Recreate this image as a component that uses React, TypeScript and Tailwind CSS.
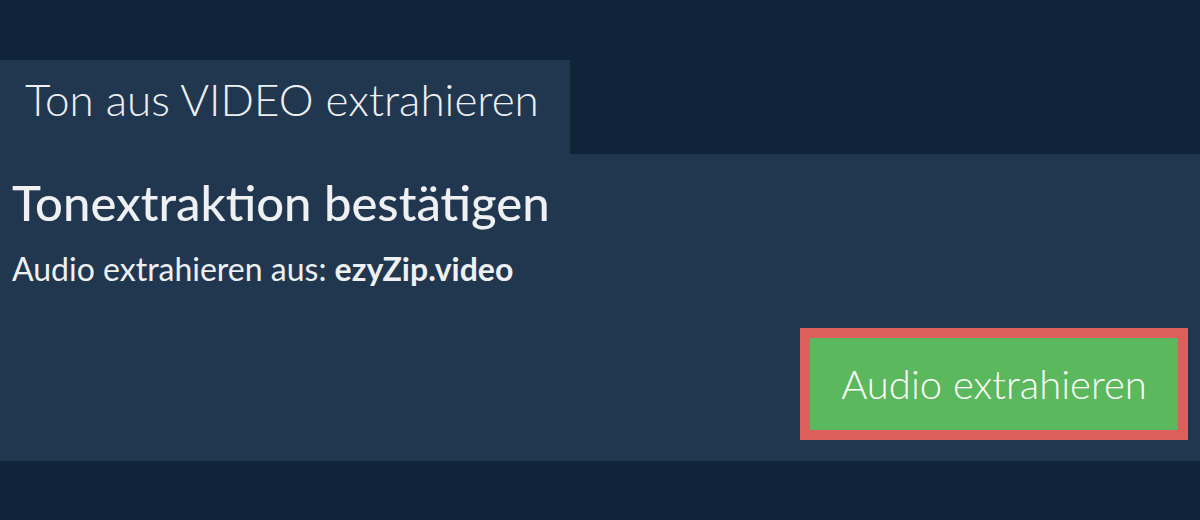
export default function App() {
  return (
    <div
      className="h-[520px] w-[1200px] bg-[#0f2339] pt-[60px]"
      style={{ fontFamily: "Lato, 'Open Sans', sans-serif" }}
    >
      <div className="flex">
        <div className="h-[94px] w-[570px] bg-[#213750] pl-[25px] pt-[17px] text-[44px] leading-none font-light text-[#eef0f2]">
          Ton aus VIDEO extrahieren
        </div>
      </div>
      <div className="h-[307px] bg-[#213750] px-3 pt-[24px]">
        <h2 className="text-[49px] leading-none font-medium text-[#eef0f2]">Tonextraktion bestätigen</h2>
        <p className="mt-[26px] text-[32px] leading-none text-[#eef0f2]">
          Audio extrahieren aus: <span className="font-bold">ezyZip.video</span>
        </p>
        <div className="mt-[43px] flex justify-end">
          <button className="h-[112px] w-[388px] border-[10px] border-[#dc5f5b] bg-[#5cb85c] text-[40px] font-light text-white">
            Audio extrahieren
          </button>
        </div>
      </div>
    </div>
  );
}
